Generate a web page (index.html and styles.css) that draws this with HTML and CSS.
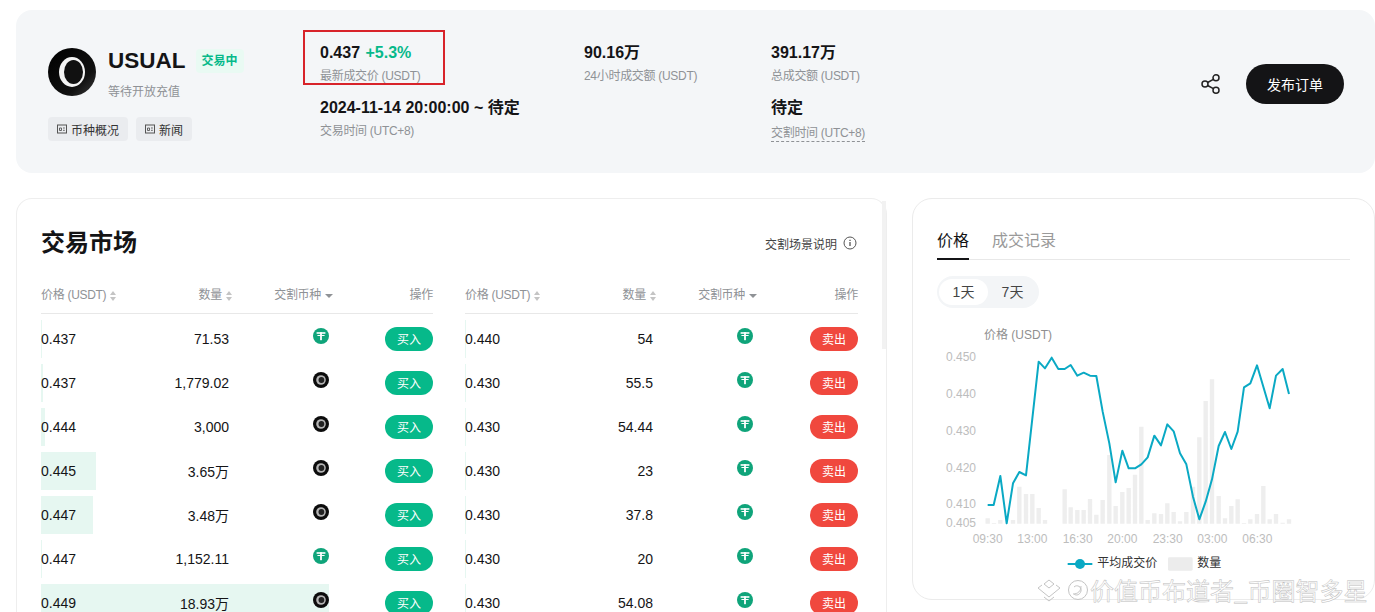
FILE: index.html
```html
<!DOCTYPE html>
<html lang="zh-CN">

<head>
    <meta charset="utf-8">
    <meta name="viewport" content="width=device-width, initial-scale=1.0">
    <title>USUAL</title>
    <link rel="stylesheet" href="styles.css">
</head>

<body>
    <svg class="sprite" width="0" height="0">
        <defs>
            <linearGradient id="sheen" x1="0" y1="0" x2="1" y2="1">
                <stop offset="0" stop-color="#000"/>
                <stop offset="0.7" stop-color="#111"/>
                <stop offset="1" stop-color="#3a3a3a"/>
            </linearGradient>
        </defs>
        <symbol id="usual" viewBox="0 0 48 48">
            <circle cx="24" cy="24" r="24" fill="url(#sheen)"/>
            <ellipse cx="24" cy="24" rx="13" ry="15" fill="#f4f4f4"/>
            <ellipse cx="25.5" cy="24" rx="9.500" ry="12" fill="#111"/>
        </symbol>
        <symbol id="usual_small" viewBox="0 0 16 16">
            <circle cx="8" cy="8" r="8" fill="#0c0c0c"/>
            <circle cx="8" cy="8" r="4.800" fill="#b5b5b5"/>
            <circle cx="8.400" cy="8" r="2.900" fill="#222"/>
        </symbol>
        <symbol id="usdt" viewBox="0 0 16 16">
            <circle cx="8" cy="8" r="8" fill="#0fa47a"/>
            <rect x="3.600" y="4.200" width="8.800" height="1.600" fill="#fff"/>
            <rect x="7.100" y="4.200" width="1.800" height="8" fill="#fff"/>
            <rect x="4.400" y="7" width="7.200" height="1" fill="#fff"/>
        </symbol>
        <symbol id="doc" viewBox="0 0 10 10">
            <rect x="0.500" y="1" width="9" height="8" fill="none" stroke="#555" stroke-width="1"/>
            <path d="M2.500 4h2v2.500h-2zM6 4h1.800M6 6.300h1.800" fill="none" stroke="#555" stroke-width="0.900"/>
        </symbol>
    </svg>

    <header class="summary">
        <div class="coin">
            <svg class="coin_logo"><use href="#usual"/></svg>
            <div class="coin_info">
                <div class="coin_title">
                    <h1>USUAL</h1>
                    <span class="tag">交易中</span>
                </div>
                <p class="coin_status">等待开放充值</p>
            </div>
            <div class="chips">
                <a class="chip"><svg class="chip_icon"><use href="#doc"/></svg>币种概况</a>
                <a class="chip"><svg class="chip_icon"><use href="#doc"/></svg>新闻</a>
            </div>
        </div>

        <div class="stats">
            <div class="stat stat_marked">
                <p class="stat_value">0.437 <span class="up">+5.3%</span></p>
                <p class="stat_label">最新成交价 (USDT)</p>
            </div>
            <div class="stat">
                <p class="stat_value">90.16万</p>
                <p class="stat_label">24小时成交额 (USDT)</p>
            </div>
            <div class="stat">
                <p class="stat_value">391.17万</p>
                <p class="stat_label">总成交额 (USDT)</p>
            </div>
            <div class="stat stat_wide">
                <p class="stat_value">2024-11-14 20:00:00 ~ 待定</p>
                <p class="stat_label">交易时间 (UTC+8)</p>
            </div>
            <div class="stat">
                <p class="stat_value">待定</p>
                <p class="stat_label stat_dashed">交割时间 (UTC+8)</p>
            </div>
        </div>

        <div class="actions">
            <svg class="share" viewBox="0 0 20 20" fill="none" stroke="#222" stroke-width="1.500">
                <circle cx="4" cy="10" r="3"/>
                <circle cx="15" cy="3.800" r="3"/>
                <circle cx="15" cy="16.200" r="3"/>
                <path d="M6.600 8.500l5.800-3.200M6.600 11.500l5.800 3.200"/>
            </svg>
            <button class="publish">发布订单</button>
        </div>
    </header>

    <main class="content">
        <section class="market">
            <div class="market_head">
                <h2>交易市场</h2>
                <a class="market_help">交割场景说明
                    <svg class="info" viewBox="0 0 14 14" fill="none" stroke="#555">
                        <circle cx="7" cy="7" r="6"/>
                        <path d="M7 6v4M7 3.800v1.200" stroke-width="1.300"/>
                    </svg>
                </a>
            </div>

            <div class="tables">
                <div class="book">
                    <div class="book_row book_header">
                        <span>价格 (USDT)<i class="sort"></i></span>
                        <span class="right">数量<i class="sort"></i></span>
                        <span class="right">交割币种<i class="drop"></i></span>
                        <span class="right">操作</span>
                    </div>
                    <div class="book_row"><b class="depth" style="width:1px"></b><span>0.437</span><span class="qty">71.53</span><svg class="token"><use href="#usdt"/></svg><button class="trade buy">买入</button></div>
                    <div class="book_row"><b class="depth" style="width:2px"></b><span>0.437</span><span class="qty">1,779.02</span><svg class="token"><use href="#usual_small"/></svg><button class="trade buy">买入</button></div>
                    <div class="book_row"><b class="depth" style="width:4px"></b><span>0.444</span><span class="qty">3,000</span><svg class="token"><use href="#usual_small"/></svg><button class="trade buy">买入</button></div>
                    <div class="book_row"><b class="depth" style="width:55px"></b><span>0.445</span><span class="qty">3.65万</span><svg class="token"><use href="#usual_small"/></svg><button class="trade buy">买入</button></div>
                    <div class="book_row"><b class="depth" style="width:52px"></b><span>0.447</span><span class="qty">3.48万</span><svg class="token"><use href="#usual_small"/></svg><button class="trade buy">买入</button></div>
                    <div class="book_row"><b class="depth" style="width:1px"></b><span>0.447</span><span class="qty">1,152.11</span><svg class="token"><use href="#usdt"/></svg><button class="trade buy">买入</button></div>
                    <div class="book_row"><b class="depth" style="width:288px"></b><span>0.449</span><span class="qty">18.93万</span><svg class="token"><use href="#usual_small"/></svg><button class="trade buy">买入</button></div>
                </div>

                <div class="book book_sell">
                    <div class="book_row book_header">
                        <span>价格 (USDT)<i class="sort"></i></span>
                        <span class="right">数量<i class="sort"></i></span>
                        <span class="right">交割币种<i class="drop"></i></span>
                        <span class="right">操作</span>
                    </div>
                    <div class="book_row"><b class="depth" style="width:1px"></b><span>0.440</span><span class="qty">54</span><svg class="token"><use href="#usdt"/></svg><button class="trade sell">卖出</button></div>
                    <div class="book_row"><b class="depth" style="width:1px"></b><span>0.430</span><span class="qty">55.5</span><svg class="token"><use href="#usdt"/></svg><button class="trade sell">卖出</button></div>
                    <div class="book_row"><b class="depth" style="width:1px"></b><span>0.430</span><span class="qty">54.44</span><svg class="token"><use href="#usdt"/></svg><button class="trade sell">卖出</button></div>
                    <div class="book_row"><b class="depth" style="width:1px"></b><span>0.430</span><span class="qty">23</span><svg class="token"><use href="#usdt"/></svg><button class="trade sell">卖出</button></div>
                    <div class="book_row"><b class="depth" style="width:1px"></b><span>0.430</span><span class="qty">37.8</span><svg class="token"><use href="#usdt"/></svg><button class="trade sell">卖出</button></div>
                    <div class="book_row"><b class="depth" style="width:1px"></b><span>0.430</span><span class="qty">20</span><svg class="token"><use href="#usdt"/></svg><button class="trade sell">卖出</button></div>
                    <div class="book_row"><b class="depth" style="width:1px"></b><span>0.430</span><span class="qty">54.08</span><svg class="token"><use href="#usdt"/></svg><button class="trade sell">卖出</button></div>
                </div>
            </div>
            <div class="scrollbar"></div>
        </section>

        <aside class="price">
            <div class="tabs">
                <a class="tab tab_active">价格</a>
                <a class="tab">成交记录</a>
            </div>
            <div class="range">
                <a class="range_item range_active">1天</a>
                <a class="range_item">7天</a>
            </div>
            <!-- chart units are 3x the screen pixels -->
            <svg class="chart" viewBox="0 -60 1140 780">
                <path class="chart_bars" d="M173 551V535M192 551V549M211 551V540M249 551V540M268 551V440M288 551V462M307 551V462M326 551V504M345 551V540M404 551V448M422 551V502M442 551V510M461 551V510M480 551V477M499 551V524M518 551V480M538 551V345M557 551V498M577 551V456M596 551V444M615 551V404M634 551V260M653 551V540M673 551V520M693 551V522M712 551V490M731 551V516M750 551V544M769 551V516M789 551V440M808 551V292M827 551V183M846 551V118M866 551V468M885 551V535M904 551V498M923 551V478M942 551V549M961 551V538M981 551V522M1000 551V438M1019 551V538M1038 551V522M1058 551V548M1077 551V538"/>
                <polyline class="chart_line" points="173,495 191,495 211,408 230,550 249,430 268,396 288,406 326,65 345,85 365,53 385,87 404,87 422,75 442,107 461,98 480,107 499,108 518,215 538,310 557,427 577,332 596,385 615,385 634,373 653,352 673,287 693,316 712,253 731,274 750,340 769,373 789,470 808,538 827,485 846,418 866,318 885,276 904,327 923,275 942,142 961,130 981,76 1000,140 1019,205 1038,107 1058,87 1077,162"/>
                <g class="chart_axis">
                    <text class="chart_unit" x="162" y="-2">价格 (USDT)</text>
                    <g text-anchor="end">
                        <text x="138" y="63">0.450</text>
                        <text x="138" y="173">0.440</text>
                        <text x="138" y="285">0.430</text>
                        <text x="138" y="395">0.420</text>
                        <text x="138" y="503">0.410</text>
                        <text x="138" y="561">0.405</text>
                    </g>
                    <g text-anchor="middle">
                        <text x="173" y="610">09:30</text>
                        <text x="307" y="610">13:00</text>
                        <text x="443" y="610">16:30</text>
                        <text x="577" y="610">20:00</text>
                        <text x="713" y="610">23:30</text>
                        <text x="847" y="610">03:00</text>
                        <text x="982" y="610">06:30</text>
                    </g>
                </g>
                <path class="legend_line" d="M413 672H487"/>
                <circle cx="450" cy="672" r="15" fill="#0aa9c4"/>
                <text class="chart_legend" x="502" y="681">平均成交价</text>
                <rect x="714" y="652" width="74" height="40" rx="4" fill="#ececec"/>
                <text class="chart_legend" x="802" y="681">数量</text>
            </svg>
        </aside>
    </main>

    <div class="watermark">
        <svg class="watermark_icon" viewBox="0 0 54 24" fill="none" stroke="#c4c4c4">
            <path d="M8 6l5-4 5 4-5 4zM2 10l4-3M24 10l-4-3M2 10l11 9 11-9M8 19l5 4 5-4"/>
            <circle cx="42" cy="12" r="9.500"/>
            <path d="M37 16c5 0 8-3 8-8M38 9c3-3 8 0 7 4s-5 5-7 3"/>
        </svg>
        <span>价值币布道者_币圈智多星</span>
    </div>
</body></html>
```

FILE: styles.css
```css
* {
    margin: 0;
    padding: 0;
    box-sizing: border-box;
}

html,
body {
    height: 612px;
    overflow: hidden;
}

body {
    padding: 10px 0 0 16px;
    background: #fff;
    color: #141416;
    font-family: "Liberation Sans", "Noto Sans CJK SC", sans-serif;
    font-size: 14px;
}

.sprite {
    position: absolute;
}

/* top summary */
.summary {
    display: flex;
    height: 163px;
    padding: 32px 31px 0 32px;
    background: #f4f6f8;
    border-radius: 16px;
}

.coin {
    width: 272px;
    display: grid;
    grid-template-columns: 48px 1fr;
    column-gap: 12px;
    align-content: start;
}

.coin_logo {
    width: 48px;
    height: 48px;
    margin-top: 6px;
}

.coin_title {
    display: flex;
    align-items: center;
    gap: 10px;
    height: 38px;
}

.coin_title h1 {
    font-size: 22.5px;
    line-height: 38px;
}

.tag {
    padding: 0 6px;
    height: 24px;
    line-height: 24px;
    background: #e9faf3;
    border-radius: 4px;
    color: #06b98a;
    font-size: 12px;
    font-weight: 700;
}

.coin_status {
    margin-top: 2px;
    color: #8f9296;
    font-size: 12px;
    line-height: 20px;
}

.chips {
    grid-column: 1 / 3;
    display: flex;
    gap: 8px;
    margin-top: 15px;
}

.chip {
    display: flex;
    align-items: center;
    gap: 4px;
    height: 24px;
    padding: 0 9px;
    background: #eaecef;
    border-radius: 4px;
    color: #333;
    font-size: 12px;
}

.chip_icon {
    width: 10px;
    height: 10px;
}

.stats {
    display: grid;
    grid-template-columns: 264px 187px 200px;
    grid-template-rows: 55px 55px;
    padding-top: 1px;
}

.stat {
    position: relative;
}

.stat_value {
    font-size: 16px;
    font-weight: 700;
    line-height: 20px;
}

.up {
    margin-left: 1px;
    color: #06b98a;
}

.stat_label {
    margin-top: 5px;
    color: #8f9296;
    font-size: 12px;
    line-height: 17px;
    letter-spacing: -0.3px;
}

.stat_wide {
    grid-column: 1 / 3;
}

.stat_dashed {
    display: inline-block;
    margin-top: 7px;
    line-height: 16px;
    border-bottom: 1px dashed #8f9296;
}

/* red box somebody drew on the screenshot */
.stat_marked::after {
    content: "";
    box-sizing: border-box;
    position: absolute;
    left: -17px;
    top: -13px;
    width: 142px;
    height: 55px;
    border: 2px solid #d8232a;
}

.actions {
    display: flex;
    align-items: center;
    gap: 25px;
    margin-left: auto;
    height: 40px;
    margin-top: 22px;
}

.share {
    width: 20px;
    height: 24px;
}

.publish {
    width: 98px;
    height: 40px;
    padding-bottom: 1px;
    border: 0;
    border-radius: 20px;
    background: #141416;
    color: #fff;
    font-family: inherit;
    font-size: 14px;
}

/* main row */
.content {
    display: flex;
    gap: 25px;
    margin-top: 25px;
}

.market {
    position: relative;
    flex: none;
    width: 871px;
    height: 440px;
    padding: 0 29px 0 24px;
    border: 1px solid #eeeeee;
    border-bottom: 0;
    border-radius: 16px 16px 0 0;
}

.scrollbar {
    position: absolute;
    right: 0;
    top: 2px;
    width: 4px;
    height: 148px;
    background: #f2f2f2;
}

.market_head {
    display: flex;
    justify-content: space-between;
    align-items: center;
    padding: 28px 0 15px;
}

.market_head h2 {
    font-size: 24px;
    line-height: 32px;
}

.market_help {
    display: flex;
    align-items: center;
    gap: 6px;
    color: #444;
    font-size: 12px;
}

.info {
    width: 14px;
    height: 14px;
}

.tables {
    display: flex;
    gap: 32px;
}

.book {
    flex: none;
    width: 392px;
}

.book_sell {
    width: 393px;
}

.book_row {
    position: relative;
    display: grid;
    grid-template-columns: 100px 92px 100px 1fr;
    align-items: center;
    height: 38px;
    margin-bottom: 6px;
    font-size: 14px;
}

.book_row > span,
.book_row > svg,
.book_row > button {
    position: relative;
}

.book_header {
    height: 40px;
    margin-bottom: 6px;
    border-bottom: 1px solid #e8e8e8;
    color: #8f9296;
    font-size: 12px;
    letter-spacing: -0.3px;
}

.right {
    text-align: right;
}

.qty {
    padding-right: 4px;
    text-align: right;
}

.depth {
    position: absolute;
    left: 0;
    top: 0;
    height: 38px;
    background: #e6f7f1;
}

.token {
    justify-self: end;
    width: 16px;
    height: 16px;
    margin: 0 4px 6px 0;
}

.trade {
    justify-self: end;
    width: 48px;
    height: 24px;
    padding-bottom: 1px;
    border: 0;
    border-radius: 12px;
    color: #fff;
    font-family: inherit;
    font-size: 12px;
}

.buy {
    background: #06b98a;
}

.sell {
    background: #f0483e;
}

.sort,
.drop {
    display: inline-block;
    position: relative;
    vertical-align: middle;
    margin-left: 4px;
    width: 7px;
    height: 10px;
}

.sort::before,
.sort::after {
    content: "";
    position: absolute;
    left: 0;
    border-left: 3.5px solid transparent;
    border-right: 3.5px solid transparent;
}

.sort::before {
    top: 0;
    border-bottom: 4px solid #c4c4c4;
}

.sort::after {
    bottom: 0;
    border-top: 4px solid #c4c4c4;
}

.drop {
    width: 8px;
    height: 4px;
    border-left: 4px solid transparent;
    border-right: 4px solid transparent;
    border-top: 4px solid #8f9296;
}

/* right card */
.price {
    flex: none;
    width: 463px;
    height: 402px;
    padding: 24px 24px 0;
    border: 1px solid #ebebeb;
    border-radius: 20px;
}

.tabs {
    display: flex;
    gap: 23px;
    height: 37px;
    border-bottom: 1px solid #e8e8e8;
}

.tab {
    height: 37px;
    font-size: 16px;
    line-height: 35px;
    color: #9a9a9a;
}

.tab_active {
    color: #141416;
    border-bottom: 2px solid #141416;
}

.range {
    display: inline-flex;
    margin-top: 16px;
    padding: 3px 2px;
    background: #f3f5f7;
    border-radius: 16px;
}

.range_item {
    width: 49px;
    height: 26px;
    line-height: 26px;
    border-radius: 13px;
    text-align: center;
    color: #444;
    font-size: 14px;
}

.range_active {
    background: #fff;
}

.chart {
    position: absolute;
    left: 930px;
    top: 320px;
    width: 380px;
    height: 260px;
}

.chart_bars {
    fill: none;
    stroke: #eeeeee;
    stroke-width: 13;
}

.chart_line {
    fill: none;
    stroke: #0aa9c4;
    stroke-width: 6;
    stroke-linejoin: round;
}

.legend_line {
    stroke: #0aa9c4;
    stroke-width: 6;
}

.chart_axis text {
    fill: #bdbdbd;
    font-size: 36px;
}

.chart_axis .chart_unit {
    fill: #8f8f8f;
}

.chart_legend {
    fill: #333;
    font-size: 36px;
}

/* watermark over the corner */
.watermark {
    position: absolute;
    left: 1036px;
    top: 574px;
    display: flex;
    align-items: center;
    color: #fff;
    font-family: "Noto Sans CJK SC", sans-serif;
    font-size: 24px;
    line-height: 32px;
    -webkit-text-stroke: 0.5px #bdbdbd;
}

.watermark_icon {
    width: 54px;
    height: 24px;
}
```
